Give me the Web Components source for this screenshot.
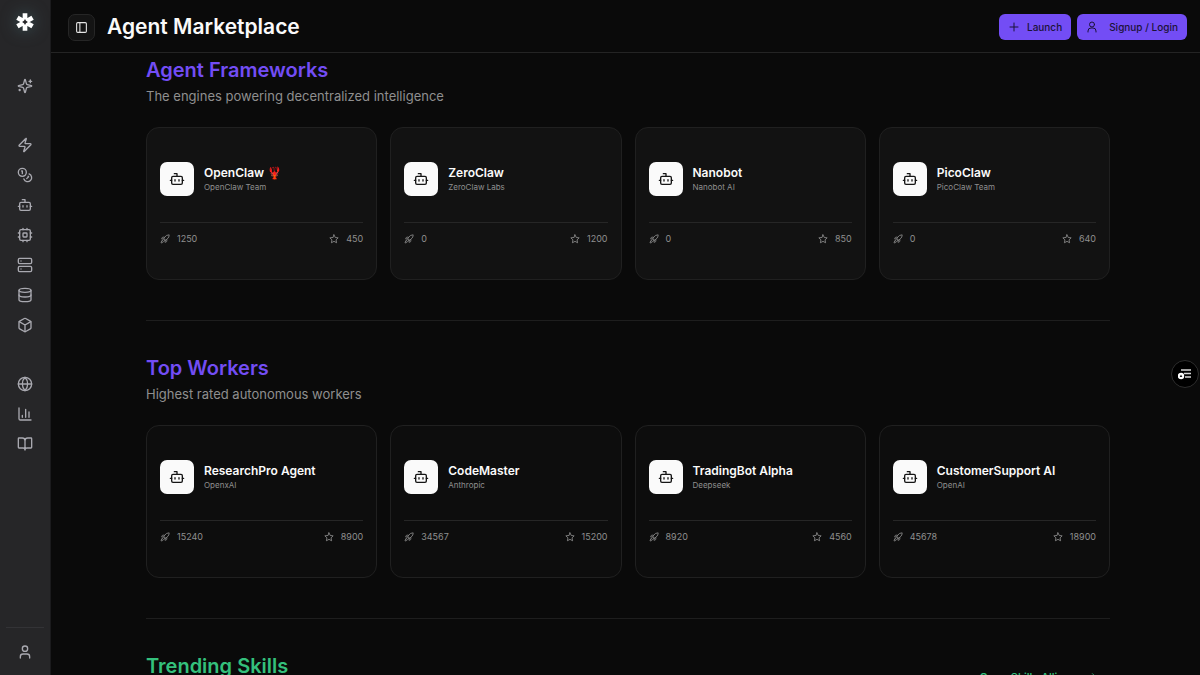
<!DOCTYPE html>
<html lang="en">
<head>
<meta charset="utf-8">
<meta name="viewport" content="width=device-width, initial-scale=1">
<title>Agent Marketplace</title>
<style>
  html, body { height: 100%; }
  body {
    margin: 0;
    background: #0a0a0a;
    color: #fafafa;
    font-family: Inter, "Liberation Sans", sans-serif;
    overflow: hidden;
    --purple: #734df5;
    --green: #34c07c;
    --line: #202020;
    --muted: #8f8f8f;
  }
</style>
</head>
<body>
<market-app>
  <side-bar slot="side"></side-bar>
  <top-bar slot="top">Agent Marketplace</top-bar>

  <market-section heading="Agent Frameworks" sub="The engines powering decentralized intelligence">
    <agent-card name="OpenClaw 🦞" team="OpenClaw Team" launches="1250" stars="450"></agent-card>
    <agent-card name="ZeroClaw" team="ZeroClaw Labs" launches="0" stars="1200"></agent-card>
    <agent-card name="Nanobot" team="Nanobot AI" launches="0" stars="850"></agent-card>
    <agent-card name="PicoClaw" team="PicoClaw Team" launches="0" stars="640"></agent-card>
  </market-section>

  <market-section class="workers" heading="Top Workers" sub="Highest rated autonomous workers">
    <agent-card name="ResearchPro Agent" team="OpenxAI" launches="15240" stars="8900"></agent-card>
    <agent-card name="CodeMaster" team="Anthropic" launches="34567" stars="15200"></agent-card>
    <agent-card name="TradingBot Alpha" team="Deepseek" launches="8920" stars="4560"></agent-card>
    <agent-card name="CustomerSupport AI" team="OpenAI" launches="45678" stars="18900"></agent-card>
  </market-section>

  <market-section class="skills" heading="Trending Skills" link="Open Skills Alliance"></market-section>

  <side-tab slot="float"></side-tab>
</market-app>

<script>
const ICONS = {
  sparkles: '<path d="M9.937 15.5A2 2 0 0 0 8.5 14.063l-6.135-1.582a.5.5 0 0 1 0-.962L8.5 9.936A2 2 0 0 0 9.937 8.5l1.582-6.135a.5.5 0 0 1 .963 0L14.063 8.5A2 2 0 0 0 15.5 9.937l6.135 1.581a.5.5 0 0 1 0 .964L15.5 14.063a2 2 0 0 0-1.437 1.437l-1.582 6.135a.5.5 0 0 1-.963 0z"/><path d="M20 3v4M22 5h-4M4 17v2M5 18H3"/>',
  zap: '<path d="M4 14a1 1 0 0 1-.78-1.63l9.9-10.2a.5.5 0 0 1 .86.46l-1.92 6.02A1 1 0 0 0 13 10h7a1 1 0 0 1 .78 1.63l-9.9 10.2a.5.5 0 0 1-.86-.46l1.92-6.02A1 1 0 0 0 11 14z"/>',
  coins: '<circle cx="8" cy="8" r="6"/><path d="M18.09 10.37A6 6 0 1 1 10.34 18M7 6h1v4M16.71 13.88l.7.71-2.82 2.82"/>',
  bot: '<path d="M12 8V4H8"/><rect width="16" height="12" x="4" y="8" rx="2"/><path d="M2 14h2M20 14h2M15 13v2M9 13v2"/>',
  cpu: '<rect width="16" height="16" x="4" y="4" rx="2"/><rect width="6" height="6" x="9" y="9" rx="1"/><path d="M15 2v2M15 20v2M2 15h2M2 9h2M20 15h2M20 9h2M9 2v2M9 20v2"/>',
  server: '<rect width="20" height="8" x="2" y="2" rx="2"/><rect width="20" height="8" x="2" y="14" rx="2"/><path d="M6 6h.01M6 18h.01"/>',
  database: '<ellipse cx="12" cy="5" rx="9" ry="3"/><path d="M3 5v14a9 3 0 0 0 18 0V5"/><path d="M3 12a9 3 0 0 0 18 0"/>',
  box: '<path d="M21 8a2 2 0 0 0-1-1.73l-7-4a2 2 0 0 0-2 0l-7 4A2 2 0 0 0 3 8v8a2 2 0 0 0 1 1.73l7 4a2 2 0 0 0 2 0l7-4A2 2 0 0 0 21 16z"/><path d="m3.3 7 8.7 5 8.7-5M12 22V12"/>',
  globe: '<circle cx="12" cy="12" r="10"/><path d="M12 2a14.5 14.5 0 0 0 0 20 14.5 14.5 0 0 0 0-20M2 12h20"/>',
  chart: '<path d="M3 3v16a2 2 0 0 0 2 2h16M18 17V9M13 17V5M8 17v-3"/>',
  book: '<path d="M12 7v14M3 18a1 1 0 0 1-1-1V4a1 1 0 0 1 1-1h5a4 4 0 0 1 4 4 4 4 0 0 1 4-4h5a1 1 0 0 1 1 1v13a1 1 0 0 1-1 1h-6a3 3 0 0 0-3 3 3 3 0 0 0-3-3z"/>',
  user: '<path d="M19 21v-2a4 4 0 0 0-4-4H9a4 4 0 0 0-4 4v2"/><circle cx="12" cy="7" r="4"/>',
  person: '<circle cx="12" cy="7" r="5"/><path d="M4 22v-2a6 6 0 0 1 6-6h4a6 6 0 0 1 6 6v2"/>',
  panel: '<rect width="18" height="18" x="3" y="3" rx="2"/><path d="M9 3v18"/>',
  plus: '<path d="M4 12h16M12 4v16"/>',
  arrow: '<path d="M4 12h16M13 4l8 8-8 8"/>',
  rocket: '<path d="M4.5 16.5c-1.5 1.26-2 5-2 5s3.74-.5 5-2c.71-.84.7-2.13-.09-2.91a2.18 2.18 0 0 0-2.91-.09z"/><path d="m12 15-3-3a22 22 0 0 1 2-3.95A12.88 12.88 0 0 1 22 2c0 2.72-.78 7.5-6 11a22.35 22.35 0 0 1-4 2z"/><path d="M9 12H4s.55-3.03 2-4c1.62-1.08 5 0 5 0M12 15v5s3.03-.55 4-2c1.08-1.62 0-5 0-5"/>',
  star: '<path d="m12 2 3 6.3 7 .9-5.1 4.8 1.3 7-6.2-3.4L5.8 21l1.3-7L2 9.2l7-.9z"/>',
};

class UiIcon extends HTMLElement {
  connectedCallback() {
    if (this.shadowRoot) return;
    this.attachShadow({ mode: "open" }).innerHTML = `
      <style>
        :host { display: inline-flex; flex: none; width: var(--size, 16px); height: var(--size, 16px); }
        svg { width: 100%; height: 100%; }
      </style>
      <svg viewBox="0 0 24 24" fill="none" stroke="currentColor" stroke-width="2"
        stroke-linecap="round" stroke-linejoin="round" aria-hidden="true">${ICONS[this.getAttribute("name")]}</svg>
    `;
  }
}

class MarketApp extends HTMLElement {
  constructor() {
    super();
    this.attachShadow({ mode: "open" }).innerHTML = `
      <style>
        :host { display: flex; height: 100vh; }
        .page { flex: 1; min-width: 0; display: flex; flex-direction: column; }
        main { flex: 1; min-height: 0; overflow: hidden; padding: 0 90px 0 95px; }
      </style>
      <slot name="side"></slot>
      <div class="page">
        <slot name="top"></slot>
        <main><slot></slot></main>
      </div>
      <slot name="float"></slot>
    `;
  }
}

class SideBar extends HTMLElement {
  constructor() {
    super();
    const item = ([icon, label]) =>
      `<a href="#${icon}" aria-label="${label}"><ui-icon name="${icon}"></ui-icon></a>`;
    const top = [["sparkles", "Explore"]];
    const build = [
      ["zap", "Launch"], ["coins", "Tokens"], ["bot", "Agents"], ["cpu", "Models"],
      ["server", "Servers"], ["database", "Data"], ["box", "Apps"],
    ];
    const more = [["globe", "Network"], ["chart", "Stats"], ["book", "Docs"]];

    this.attachShadow({ mode: "open" }).innerHTML = `
      <style>
        :host {
          display: flex; flex-direction: column; flex: none; box-sizing: border-box;
          width: 51px; border-right: 1px solid #1b1b1d; background: #262628; color: #a9a9b0;
        }
        .logo { display: flex; justify-content: center; padding: 12px 0 39px; color: #fff; }
        .logo svg { width: 20px; height: 20px; overflow: visible; filter: drop-shadow(0 0 8px #3c565c); }
        nav { display: flex; flex-direction: column; gap: 29px; flex: 1; }
        .group { display: flex; flex-direction: column; }
        a { display: flex; justify-content: center; align-items: center; height: 30px; color: inherit; }
        .foot { margin: 0 6px; padding: 9px 0 8px; border-top: 1px solid #333336; }
      </style>
      <div class="logo">
        <svg viewBox="0 0 24 24" role="img" aria-label="Home">
          <path d="M12 1.5v21M2.9 6.8l18.2 10.4M2.9 17.200 21.100 6.800" stroke="currentColor" stroke-width="5.6" fill="none"/>
          <path d="m12 8.500 1.200 2 2.300 1.500-2.300 1.500-1.200 2-1.200-2L8.500 12l2.300-1.500z" fill="#262628"/>
        </svg>
      </div>
      <nav aria-label="Main">
        <div class="group">${top.map(item).join("")}</div>
        <div class="group">${build.map(item).join("")}</div>
        <div class="group">${more.map(item).join("")}</div>
      </nav>
      <div class="foot">${item(["user", "Account"])}</div>
    `;
  }
}

class TopBar extends HTMLElement {
  constructor() {
    super();
    this.attachShadow({ mode: "open" }).innerHTML = `
      <style>
        :host {
          display: flex; align-items: center; flex: none; box-sizing: border-box;
          height: 53px; padding: 2px 13px 0 17px; border-bottom: 1px solid #242424;
        }
        h1 { flex: 1; margin: 0 0 0 12px; font-size: 21px; line-height: 28px; font-weight: 600; }
        button { display: flex; align-items: center; font: inherit; cursor: pointer; }
        .toggle {
          justify-content: center; width: 27px; height: 27px; padding: 0;
          border: 1px solid #262626; border-radius: 7px; background: #141414; color: #e4e4e4; --size: 13px;
        }
        .actions { display: flex; gap: 6px; }
        .actions button {
          height: 26px; padding: 0 9px; border: 0; border-radius: 6px;
          background: var(--purple); color: #1b1238; font-size: 10px; font-weight: 500; --size: 12px;
        }
        .launch { gap: 7px; }
        .login { gap: 11px; }
      </style>
      <button class="toggle" aria-label="Toggle sidebar"><ui-icon name="panel"></ui-icon></button>
      <h1><slot></slot></h1>
      <div class="actions">
        <button class="launch"><ui-icon name="plus"></ui-icon>Launch</button>
        <button class="login"><ui-icon name="person"></ui-icon>Signup / Login</button>
      </div>
    `;
  }
}

class MarketSection extends HTMLElement {
  connectedCallback() {
    if (this.shadowRoot) return;
    const sub = this.getAttribute("sub");
    const link = this.getAttribute("link");
    this.attachShadow({ mode: "open" }).innerHTML = `
      <style>
        :host { display: block; padding: 3px 0 40px; }
        :host(:not(:first-of-type)) { padding-top: 33px; border-top: 1px solid #1e1e1e; }
        :host(.skills) { --accent: var(--green); }
        :host(.workers) { --card: #0d0d0d; }
        header { display: flex; justify-content: space-between; align-items: flex-start; }
        h2 { margin: 0; color: var(--accent, var(--purple)); font-size: 20px; line-height: 28px; font-weight: 600; }
        p { margin: 3px 0 0; color: var(--muted); font-size: 13px; line-height: 18px; }
        a {
          display: flex; align-items: center; gap: 4px; margin-top: 17px; padding-right: 13px; --size: 10px;
          color: var(--green); font-size: 11px; line-height: 16px; font-weight: 500; text-decoration: none;
        }
        .grid { display: grid; grid-template-columns: repeat(4, minmax(0, 1fr)); gap: 13px; margin-top: 22px; }
      </style>
      <header>
        <div>
          <h2>${this.getAttribute("heading")}</h2>
          ${sub ? `<p>${sub}</p>` : ""}
        </div>
        ${link ? `<a href="#skills">${link}<ui-icon name="arrow"></ui-icon></a>` : ""}
      </header>
      <div class="grid"><slot></slot></div>
    `;
  }
}

class AgentCard extends HTMLElement {
  connectedCallback() {
    if (this.shadowRoot) return;
    this.attachShadow({ mode: "open" }).innerHTML = `
      <style>
        :host {
          display: block; padding: 34px 13px; border: 1px solid var(--line);
          border-radius: 13px; background: var(--card, #121212);
        }
        .head { display: flex; align-items: center; gap: 10px; }
        .avatar {
          display: flex; justify-content: center; align-items: center; flex: none;
          width: 34px; height: 34px; border-radius: 7px; background: #fafafa; color: #151515; --size: 16px;
        }
        h3 { margin: 0; font-size: 12px; line-height: 16px; font-weight: 600; white-space: nowrap; }
        p { margin: 0; color: var(--muted); font-size: 8px; line-height: 13px; }
        .stats {
          display: flex; justify-content: space-between; margin-top: 26px; padding-top: 10px;
          border-top: 1px solid #262626; color: var(--muted); font-size: 9px; line-height: 12px; --size: 10px;
        }
        .stats span { display: flex; align-items: center; gap: 7px; }
      </style>
      <div class="head">
        <div class="avatar"><ui-icon name="bot"></ui-icon></div>
        <div>
          <h3>${this.getAttribute("name")}</h3>
          <p>${this.getAttribute("team")}</p>
        </div>
      </div>
      <div class="stats">
        <span><ui-icon name="rocket"></ui-icon>${this.getAttribute("launches")}</span>
        <span><ui-icon name="star"></ui-icon>${this.getAttribute("stars")}</span>
      </div>
    `;
  }
}

// floating handle on the right edge
class SideTab extends HTMLElement {
  constructor() {
    super();
    this.attachShadow({ mode: "open" }).innerHTML = `
      <style>
        :host { position: fixed; right: 1px; top: calc(50% + 22px); }
        button {
          display: flex; align-items: center; justify-content: center; width: 28px; height: 28px;
          padding: 0; border: 1px solid #2e2e2e; border-radius: 50%; background: #000;
        }
        svg { width: 14px; height: 14px; }
      </style>
      <button aria-label="Open panel">
        <svg viewBox="0 0 14 14" aria-hidden="true">
          <path d="M3 3h10M6 6.5h7M7 10h6" stroke="#d8d8d8" stroke-width="1.4"/>
          <circle cx="3" cy="9" r="3.2" fill="#fff"/>
          <path d="m3 7.6 1.3 2.3H1.7z" fill="#111"/>
        </svg>
      </button>
    `;
  }
}

customElements.define("ui-icon", UiIcon);
customElements.define("market-app", MarketApp);
customElements.define("side-bar", SideBar);
customElements.define("top-bar", TopBar);
customElements.define("market-section", MarketSection);
customElements.define("agent-card", AgentCard);
customElements.define("side-tab", SideTab);
</script>
</body>
</html>
